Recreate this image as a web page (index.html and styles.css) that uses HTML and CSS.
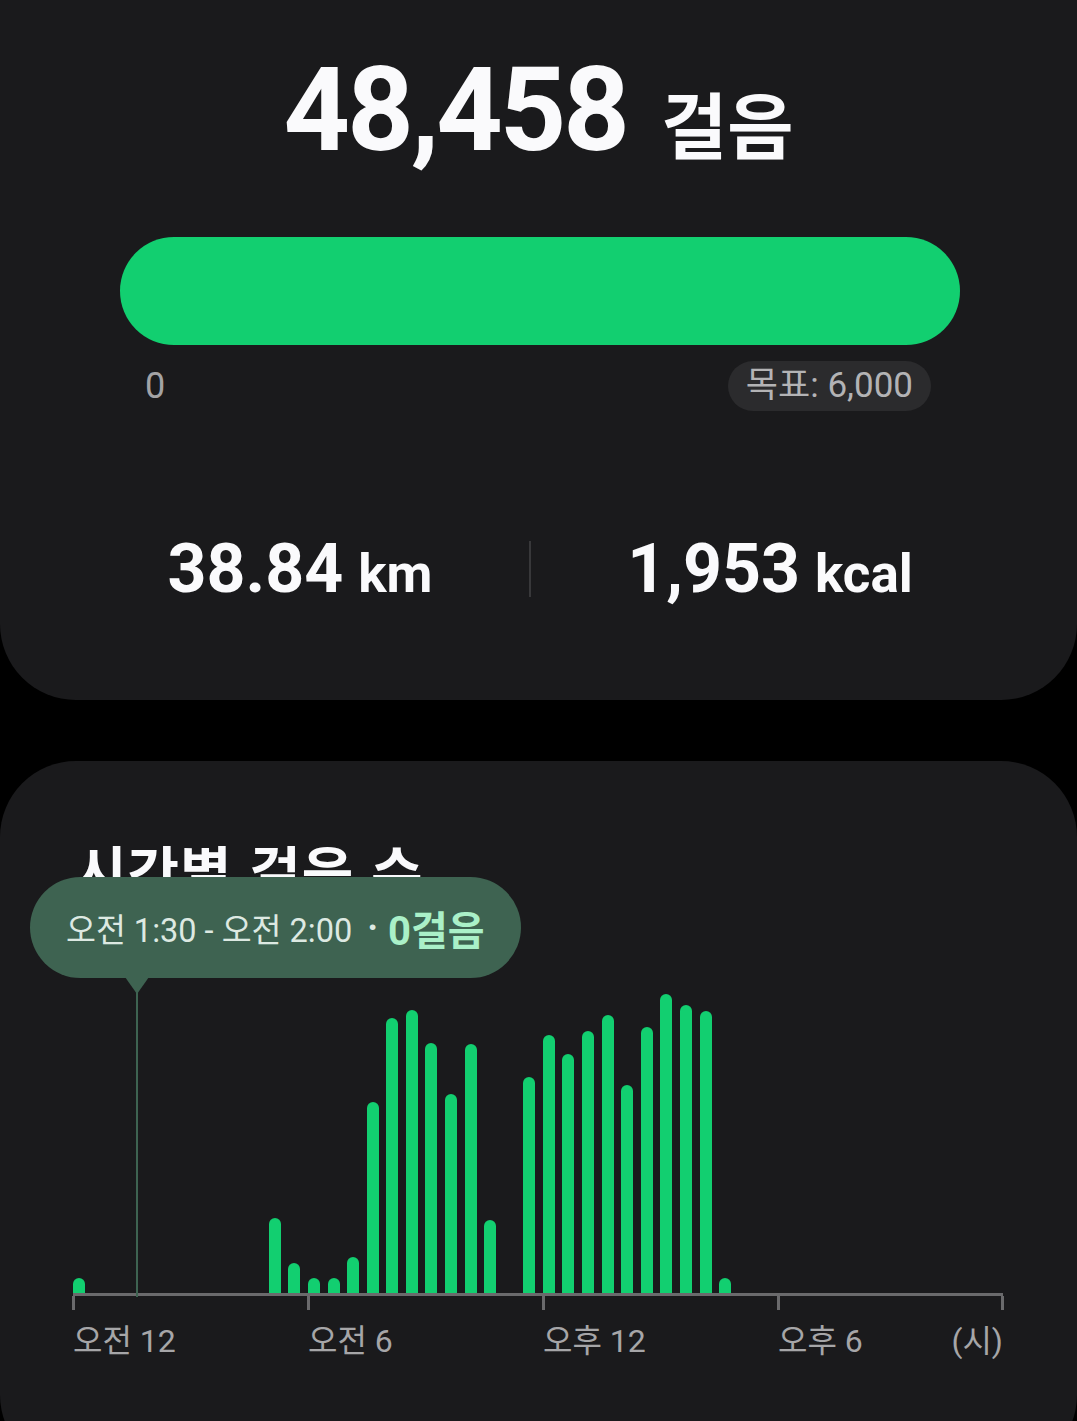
FILE: index.html
```html
<!DOCTYPE html>
<html lang="ko">
<head>
    <meta charset="UTF-8">
    <meta name="viewport" content="width=device-width, initial-scale=1.0">
    <title>걸음 수</title>
    <link rel="stylesheet" href="styles.css">
</head>
<body>
    <section class="card summary">
        <div class="total">
            <span class="total-num">48,458</span>
            <span class="total-unit">걸음</span>
        </div>

        <div class="goal-bar"><div class="goal-fill"></div></div>

        <div class="goal-labels">
            <span class="goal-zero">0</span>
            <span class="goal-pill">목표: 6,000</span>
        </div>

        <div class="stats">
            <div class="stat"><span class="stat-num">38.84</span><span class="stat-unit">km</span></div>
            <div class="stat-divider"></div>
            <div class="stat"><span class="stat-num">1,953</span><span class="stat-unit">kcal</span></div>
        </div>
    </section>

    <section class="card hourly">
        <h2 class="hourly-title">시간별 걸음 수</h2>

        <div class="chart">
            <div class="bars" id="bars">
                <!-- bars are filled in below -->
            </div>
            <div class="axis">
                <div class="axis-cell"></div>
                <div class="axis-cell"></div>
                <div class="axis-cell"></div>
                <div class="axis-cell last"></div>
            </div>
            <div class="axis-labels">
                <span>오전 12</span>
                <span>오전 6</span>
                <span>오후 12</span>
                <span class="split"><span>오후 6</span><span>(시)</span></span>
            </div>
        </div>

        <div class="tooltip">
            <div class="tooltip-box">
                <span class="tooltip-range">오전 1:30 - 오전 2:00</span>
                <span class="tooltip-dot">·</span>
                <span class="tooltip-value">0걸음</span>
            </div>
            <div class="tooltip-arrow"></div>
            <div class="tooltip-line"></div>
        </div>
    </section>

    <script>
        // height in px per half-hour slot (48 slots a day)
        const steps = {
            0: 15, 10: 75, 11: 30, 12: 15, 13: 15, 14: 36, 15: 191, 16: 275,
            17: 283, 18: 250, 19: 199, 20: 249, 21: 73, 23: 216, 24: 258,
            25: 239, 26: 262, 27: 278, 28: 208, 29: 266, 30: 299, 31: 288,
            32: 282, 33: 15
        };

        const barsEl = document.getElementById('bars');
        for (let i = 0; i < 48; i++) {
            const slot = document.createElement('div');
            slot.className = 'slot';
            if (steps[i]) {
                const bar = document.createElement('div');
                bar.className = 'bar';
                bar.style.height = steps[i] + 'px';
                slot.appendChild(bar);
            }
            barsEl.appendChild(slot);
        }
    </script>
</body>
</html>
```

FILE: styles.css
```css
html, body {
    overflow: hidden;
}
body {
    margin: 0;
    padding: 0;
    background: #000;
    color: #fafafc;
    font-family: Roboto, "Noto Sans CJK KR", sans-serif;
}
.card {
    background: #1a1a1c;
    border-radius: 76px;
}
.summary {
    height: 700px;
    box-sizing: border-box;
    border-radius: 0 0 76px 76px;
    padding-top: 52px;
}
.total {
    display: flex;
    justify-content: center;
    align-items: baseline;
    gap: 34px;
    line-height: 1;
}
.total-num {
    font-size: 116px;
    font-weight: 700;
    letter-spacing: -3px;
}
.total-unit {
    font-family: "Noto Sans CJK KR", sans-serif;
    font-size: 72px;
    font-weight: 700;
    position: relative;
    top: 3px;
}
.goal-bar {
    margin: 69px 117px 0 120px;
    height: 108px;
    border-radius: 54px;
    background: #2c2c2e;
    overflow: hidden;
}
.goal-fill {
    width: 100%;
    height: 100%;
    background: #12cf70;
}
.goal-labels {
    display: flex;
    justify-content: space-between;
    align-items: center;
    margin: 16px 146px 0 145px;
}
.goal-zero {
    font-size: 36px;
    color: #a3a3a5;
}
.goal-pill {
    height: 50px;
    line-height: 50px;
    padding: 0 18px;
    border-radius: 25px;
    background: #2b2b2d;
    font-size: 35px;
    color: #b3b3b5;
}
.stats {
    display: grid;
    grid-template-columns: 458px 2px 1fr;
    align-items: center;
    margin: 124px 68px 0 71px;
}
.stat {
    display: flex;
    justify-content: center;
    align-items: baseline;
    gap: 15px;
    line-height: 1;
}
.stat-num {
    font-size: 68px;
    font-weight: 700;
}
.stat-unit {
    font-size: 53px;
    font-weight: 700;
}
.stat-divider {
    width: 2px;
    height: 56px;
    background: #38383a;
}
.hourly {
    position: relative;
    margin-top: 61px;
    height: 710px;
    padding: 78px 0 0 73px;
    box-sizing: border-box;
}
.hourly-title {
    margin: 0 0 0 2px;
    font-family: "Noto Sans CJK KR", sans-serif;
    font-size: 56px;
    font-weight: 700;
    line-height: 60px;
    letter-spacing: 1px;
}
.chart {
    width: 930px;
    margin-top: 74px;
}
.bars {
    display: flex;
    align-items: flex-end;
    height: 320px;
}
.slot {
    flex: 0 0 19.58px;
}
.bar {
    width: 12px;
    background: #12cf70;
    border-radius: 6px 6px 0 0;
}
.axis {
    display: grid;
    grid-template-columns: 235px 235px 235px 225px;
    border-top: 3px solid #6a6a6c;
}
.axis-cell {
    height: 14px;
    border-left: 3px solid #6a6a6c;
    margin-left: -1px;
}
.axis-cell.last {
    border-right: 3px solid #6a6a6c;
    margin-right: -1px;
}
.axis-labels {
    display: grid;
    grid-template-columns: 235px 235px 235px 225px;
    margin-top: 9px;
    font-size: 32px;
    line-height: 44px;
    color: #a6a6a8;
}
.split {
    display: flex;
    justify-content: space-between;
}
.tooltip {
    position: absolute;
    left: 30px;
    top: 116px;
}
.tooltip-box {
    display: flex;
    align-items: center;
    height: 101px;
    padding: 0 36px;
    border-radius: 51px;
    background: #3e6351;
    box-sizing: border-box;
    white-space: nowrap;
}
.tooltip-range {
    font-size: 32.5px;
    color: #dde9e2;
}
.tooltip-dot {
    margin: 0 10px 0 15px;
    font-size: 36px;
    font-weight: 700;
    color: #dde9e2;
}
.tooltip-value {
    font-size: 40px;
    font-weight: 700;
    color: #aaf0c8;
}
.tooltip-arrow {
    position: absolute;
    left: 95px;
    top: 100px;
    width: 0;
    height: 0;
    border-left: 12px solid transparent;
    border-right: 12px solid transparent;
    border-top: 17px solid #3e6351;
}
.tooltip-line {
    position: absolute;
    left: 106px;
    top: 110px;
    width: 2px;
    height: 310px;
    background: #3e6351;
}
```
